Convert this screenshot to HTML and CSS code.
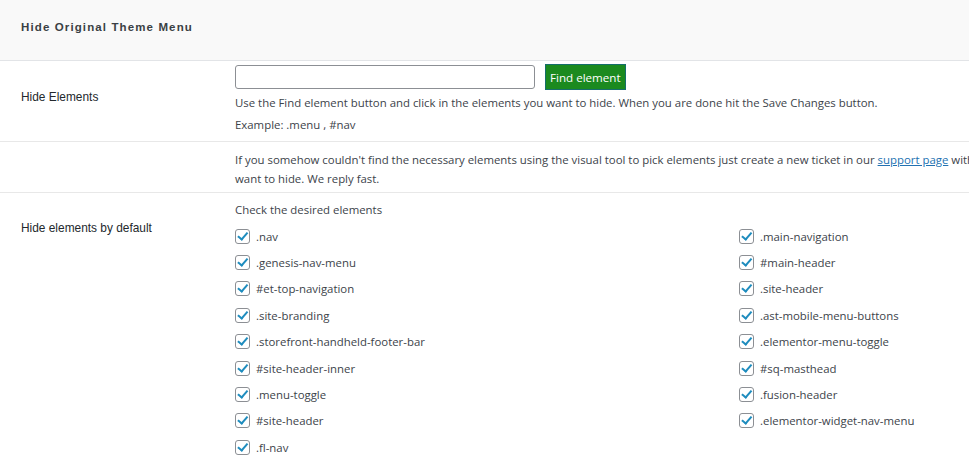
FILE: index.html
```html
<!DOCTYPE html>
<html>
<head>
<meta charset="utf-8">
<link rel="stylesheet" href="styles.css">
</head>
<body>
<div class="panel">
  <div class="panel-head"><h2 class="panel-title">Hide Original Theme Menu</h2></div>
  <div class="row row-find">
    <div class="row-label">Hide Elements</div>
    <div class="row-body">
      <div class="find-line">
        <input class="find-input" type="text">
        <button class="btn-find">Find element</button>
      </div>
      <p class="desc">Use the Find element button and click in the elements you want to hide. When you are done hit the Save Changes button.</p>
      <p class="desc">Example: .menu , #nav</p>
    </div>
  </div>
  <div class="row row-help">
    <div class="row-label"></div>
    <div class="row-body">
      <p class="help">If you somehow couldn't find the necessary elements using the visual tool to pick elements just create a new ticket in our <a href="#" class="link">support page</a> with the elements you want to hide. We reply fast.</p>
    </div>
  </div>
  <div class="row row-default">
    <div class="row-label label-default">Hide elements by default</div>
    <div class="row-body">
      <p class="check-title">Check the desired elements</p>
      <div class="check-grid">
        <label class="check"><span class="box"></span>.nav</label>
        <label class="check"><span class="box"></span>.main-navigation</label>
        <label class="check"><span class="box"></span>.genesis-nav-menu</label>
        <label class="check"><span class="box"></span>#main-header</label>
        <label class="check"><span class="box"></span>#et-top-navigation</label>
        <label class="check"><span class="box"></span>.site-header</label>
        <label class="check"><span class="box"></span>.site-branding</label>
        <label class="check"><span class="box"></span>.ast-mobile-menu-buttons</label>
        <label class="check"><span class="box"></span>.storefront-handheld-footer-bar</label>
        <label class="check"><span class="box"></span>.elementor-menu-toggle</label>
        <label class="check"><span class="box"></span>#site-header-inner</label>
        <label class="check"><span class="box"></span>#sq-masthead</label>
        <label class="check"><span class="box"></span>.menu-toggle</label>
        <label class="check"><span class="box"></span>.fusion-header</label>
        <label class="check"><span class="box"></span>#site-header</label>
        <label class="check"><span class="box"></span>.elementor-widget-nav-menu</label>
        <label class="check"><span class="box"></span>.fl-nav</label>
      </div>
    </div>
  </div>
</div>
</body>
</html>
```
FILE: styles.css
```css
html, body {
  margin: 0;
  padding: 0;
  background: #fff;
  overflow: hidden;
}
body {
  width: 969px;
  height: 466px;
}
.panel {
  width: 1120px;
  font-family: "Open Sans", "Noto Sans", sans-serif;
  font-size: 11.4px;
  color: #3c434a;
}
.panel-head {
  height: 60px;
  background: #f9f9f9;
  border-bottom: 1px solid #e2e4e7;
  display: flex;
  align-items: center;
  padding-left: 21px;
}
.panel-title {
  margin: 0 0 7px 0;
  font-family: "Liberation Sans", Arial, sans-serif;
  font-size: 11.5px;
  font-weight: bold;
  letter-spacing: 1.12px;
  color: #3a3f44;
}
.row {
  display: grid;
  grid-template-columns: 235px 1fr;
  border-bottom: 1px solid #e8e8e8;
}
.row-default {
  border-bottom: none;
  padding-bottom: 20px;
}
.row-label {
  padding-left: 21px;
  font-family: "Liberation Sans", Arial, sans-serif;
  font-size: 11.9px;
  color: #23282d;
}
.row-find {
  height: 80px;
}
.row-find .row-label {
  padding-top: 29px;
}
.find-line {
  display: flex;
  align-items: center;
  gap: 10px;
  margin-top: 3px;
}
.find-input {
  width: 300px;
  height: 24px;
  box-sizing: border-box;
  border: 1px solid #8c8f94;
  border-radius: 3px;
  background: #fff;
  margin: 0;
}
.btn-find {
  height: 26px;
  box-sizing: border-box;
  padding: 0 4px;
  background: #1b8a1f;
  border: 1px solid #156e6b;
  color: #fff;
  font-family: "Open Sans", "Noto Sans", sans-serif;
  font-size: 11.6px;
  border-radius: 0;
}
.desc {
  margin: 0;
  line-height: 22px;
}
.find-line + .desc {
  margin-top: 2px;
}
.row-help {
  height: 50px;
}
.help {
  margin: 8px 0 0 0;
  width: 860px;
  line-height: 19px;
}
.link {
  color: #2271b1;
  text-decoration: underline;
}
.label-default {
  padding-top: 28px;
}
.check-title {
  margin: 8px 0 0 0;
  line-height: 18px;
}
.check-grid {
  display: grid;
  grid-template-columns: 504px 1fr;
  grid-auto-rows: 26.4px;
  margin-top: 4px;
}
.check {
  display: flex;
  align-items: center;
  gap: 6px;
  color: #3c434a;
}
.box {
  width: 13px;
  height: 13px;
  border: 1px solid #8c8f94;
  border-radius: 3px;
  background: #fff;
  position: relative;
  flex: none;
}
.box::after {
  content: "";
  position: absolute;
  left: 4px;
  top: 0px;
  width: 3.5px;
  height: 7.5px;
  border: solid #1e8cbe;
  border-width: 0 2.2px 2.2px 0;
  transform: rotate(40deg);
}
```
